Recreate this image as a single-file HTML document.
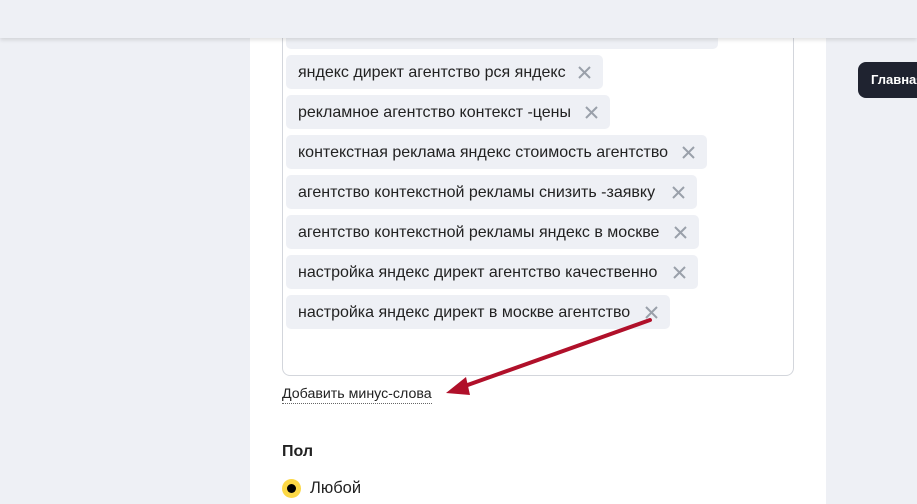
<!DOCTYPE html>
<html><head><meta charset="utf-8"><style>
body{margin:0;width:917px;height:504px;overflow:hidden;background:#eef0f5;font-family:"Liberation Sans",Arial,sans-serif;position:relative}
.panel{position:absolute;left:250px;top:0;width:576px;height:504px;background:#fff}
.top{position:absolute;left:0;top:0;width:917px;height:38px;background:#eef0f5;box-shadow:0 2px 4px rgba(0,0,0,.12);z-index:5}
.ta{position:absolute;left:282px;top:-20px;width:510px;height:394px;border:1px solid #d3d6dc;border-radius:8px}
.chip{position:absolute;left:286px;height:34px;background:#eef0f5;border-radius:5px;font-size:16px;color:#222;line-height:36px;padding-left:12px;box-sizing:border-box;white-space:nowrap}
.chip svg{position:absolute;top:11px}
.tip{position:absolute;left:858px;top:62px;width:80px;height:36px;background:#1f2330;border-radius:8px;color:#fff;font-size:13px;font-weight:bold;line-height:36px;padding-left:13px;box-sizing:border-box}
</style></head><body>
<div class="panel"></div>
<div class="ta"></div>
<div class="chip" style="top:15px;width:432px"></div>
<div class="chip" style="top:55px;width:317px">яндекс директ агентство рся яндекс<svg style="left:292px" width="13" height="13"><path d="M1 1L12 12M12 1L1 12" stroke="#9aa0aa" stroke-width="2"/></svg></div>
<div class="chip" style="top:95px;width:324px">рекламное агентство контекст -цены<svg style="left:299px" width="13" height="13"><path d="M1 1L12 12M12 1L1 12" stroke="#9aa0aa" stroke-width="2"/></svg></div>
<div class="chip" style="top:135px;width:421px">контекстная реклама яндекс стоимость агентство<svg style="left:396px" width="13" height="13"><path d="M1 1L12 12M12 1L1 12" stroke="#9aa0aa" stroke-width="2"/></svg></div>
<div class="chip" style="top:175px;width:411px">агентство контекстной рекламы снизить -заявку<svg style="left:386px" width="13" height="13"><path d="M1 1L12 12M12 1L1 12" stroke="#9aa0aa" stroke-width="2"/></svg></div>
<div class="chip" style="top:215px;width:413px">агентство контекстной рекламы яндекс в москве<svg style="left:388px" width="13" height="13"><path d="M1 1L12 12M12 1L1 12" stroke="#9aa0aa" stroke-width="2"/></svg></div>
<div class="chip" style="top:255px;width:412px">настройка яндекс директ агентство качественно<svg style="left:387px" width="13" height="13"><path d="M1 1L12 12M12 1L1 12" stroke="#9aa0aa" stroke-width="2"/></svg></div>
<div class="chip" style="top:295px;width:384px">настройка яндекс директ в москве агентство<svg style="left:359px" width="13" height="13"><path d="M1 1L12 12M12 1L1 12" stroke="#9aa0aa" stroke-width="2"/></svg></div>
<div class="top"></div>
<div class="tip">Главная</div>
<div style="position:absolute;left:282px;top:386px;font-size:14.2px;color:#222;border-bottom:1px dotted #666;line-height:17px">Добавить минус-слова</div>
<div style="position:absolute;left:282px;top:443px;font-size:16px;font-weight:bold;color:#222">Пол</div>
<div style="position:absolute;left:282px;top:479px;width:19px;height:19px;border-radius:50%;background:#fcd846"></div>
<div style="position:absolute;left:287px;top:484px;width:9px;height:9px;border-radius:50%;background:#000"></div>
<div style="position:absolute;left:310px;top:479px;font-size:16.5px;color:#222">Любой</div>
<svg style="position:absolute;left:0;top:0" width="917" height="504"><line x1="650" y1="320" x2="462" y2="387" stroke="#b0102a" stroke-width="4" stroke-linecap="round"/><path d="M446 393L466 377L470 395Z" fill="#b0102a"/></svg>
</body></html>
